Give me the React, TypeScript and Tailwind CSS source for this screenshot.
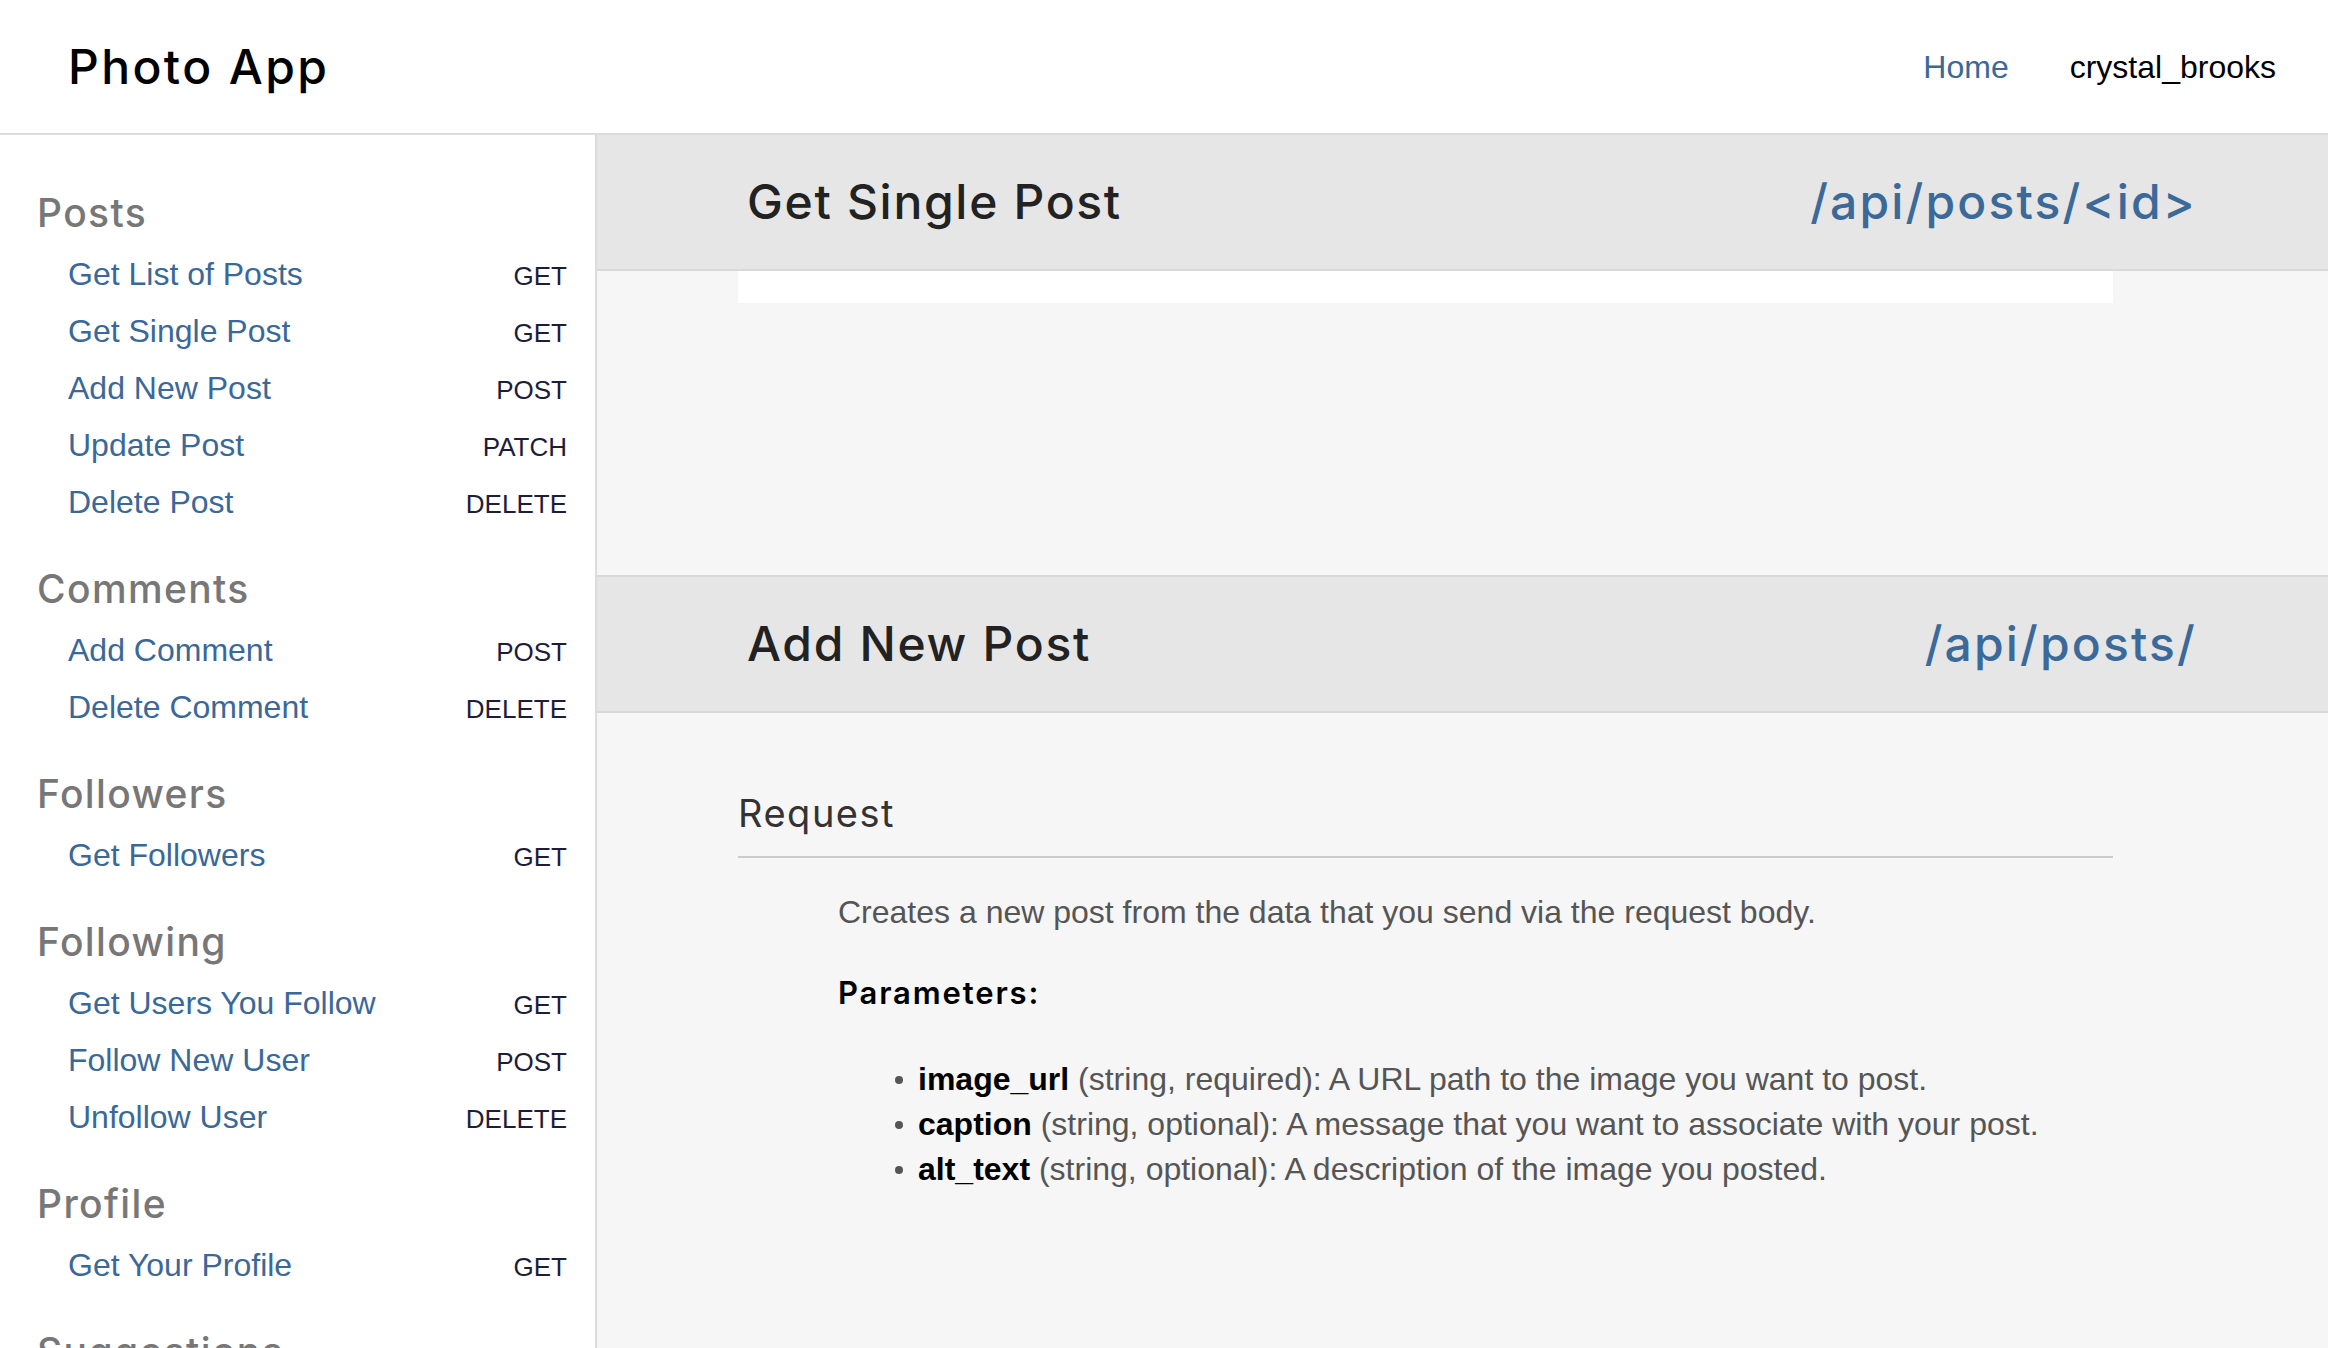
import React from "react";

type Endpoint = { label: string; method: string };
type Group = { title: string; items: Endpoint[] };

const groups: Group[] = [
  {
    title: "Posts",
    items: [
      { label: "Get List of Posts", method: "GET" },
      { label: "Get Single Post", method: "GET" },
      { label: "Add New Post", method: "POST" },
      { label: "Update Post", method: "PATCH" },
      { label: "Delete Post", method: "DELETE" },
    ],
  },
  {
    title: "Comments",
    items: [
      { label: "Add Comment", method: "POST" },
      { label: "Delete Comment", method: "DELETE" },
    ],
  },
  { title: "Followers", items: [{ label: "Get Followers", method: "GET" }] },
  {
    title: "Following",
    items: [
      { label: "Get Users You Follow", method: "GET" },
      { label: "Follow New User", method: "POST" },
      { label: "Unfollow User", method: "DELETE" },
    ],
  },
  { title: "Profile", items: [{ label: "Get Your Profile", method: "GET" }] },
  { title: "Suggestions", items: [{ label: "Get Suggestions", method: "GET" }] },
];

const params = [
  { name: "image_url", text: "(string, required): A URL path to the image you want to post." },
  { name: "caption", text: "(string, optional): A message that you want to associate with your post." },
  { name: "alt_text", text: "(string, optional): A description of the image you posted." },
];

function Sidebar() {
  return (
    <aside className="w-[597px] shrink-0 border-r-2 border-[#dcdcdc] bg-white pt-[46px] pr-[28px]">
      {groups.map((g) => (
        <section key={g.title} className="mb-[27px]">
          <h2 className="flex h-[64px] items-center pl-[37px] font-['Inter',sans-serif] text-[39px] font-medium tracking-[0.035em] text-[#777]">
            {g.title}
          </h2>
          {g.items.map((it) => (
            <div key={it.label} className="flex h-[57px] items-center pl-[68px]">
              <div className="flex w-full items-baseline justify-between">
                <a href="#" className="text-[32px] text-[#3a6899]">
                  {it.label}
                </a>
                <span className="text-[26px] text-[#1d1d3b]">{it.method}</span>
              </div>
            </div>
          ))}
        </section>
      ))}
    </aside>
  );
}

function Bar({ title, path }: { title: string; path: string }) {
  return (
    <div className="flex h-[136px] items-center justify-between border-b-2 border-[#d9d9d9] bg-[#e6e6e6] pl-[150px] pr-[131px] font-['Inter',sans-serif] text-[48px] font-medium">
      <h1 className="tracking-[0.035em] text-[#222]">{title}</h1>
      <span className="tracking-[0.045em] text-[#3b6a9a]">{path}</span>
    </div>
  );
}

export default function App() {
  return (
    <div className="flex h-screen flex-col overflow-hidden bg-white font-['Liberation_Sans',Arial,sans-serif]">
      <header className="flex h-[135px] shrink-0 items-center justify-between border-b-2 border-[#dcdcdc] pl-[68px] pr-[52px]">
        <span className="font-['Inter',sans-serif] text-[48px] font-medium tracking-[0.05em] text-black">
          Photo App
        </span>
        <nav className="flex items-center gap-[61px] text-[32px]">
          <a href="#" className="text-[#3a6899]">
            Home
          </a>
          <span className="text-black">crystal_brooks</span>
        </nav>
      </header>

      <div className="flex min-h-0 flex-1">
        <Sidebar />

        <main className="min-w-0 flex-1 bg-[#f6f6f6]">
          <Bar title="Get Single Post" path="/api/posts/<id>" />
          <div className="h-[306px] border-b-2 border-[#d9d9d9]">
            <div className="ml-[141px] h-[32px] w-[1375px] bg-white" />
          </div>

          <Bar title="Add New Post" path="/api/posts/" />

          <div className="ml-[141px] w-[1375px] pt-[76px]">
            <h3 className="border-b-2 border-[#cccccc] pb-[19px] font-['Inter',sans-serif] text-[38px] leading-[48px] tracking-[0.04em] text-[#333]">
              Request
            </h3>
            <div className="pl-[100px]">
              <p className="mt-[30px] text-[32px] leading-[48px] text-[#555]">
                Creates a new post from the data that you send via the request body.
              </p>
              <h4 className="mt-[37px] font-['Inter',sans-serif] text-[31px] font-semibold leading-[40px] tracking-[0.06em] text-black">
                Parameters:
              </h4>
              <ul className="mt-[44px]">
                {params.map((p) => (
                  <li key={p.name} className="flex items-center text-[32px] leading-[45px] text-[#555]">
                    <span className="ml-[57px] mr-[15px] h-[8px] w-[8px] rounded-full bg-[#555]" />
                    <span>
                      <b className="text-black">{p.name}</b> {p.text}
                    </span>
                  </li>
                ))}
              </ul>
            </div>
          </div>
        </main>
      </div>
    </div>
  );
}
